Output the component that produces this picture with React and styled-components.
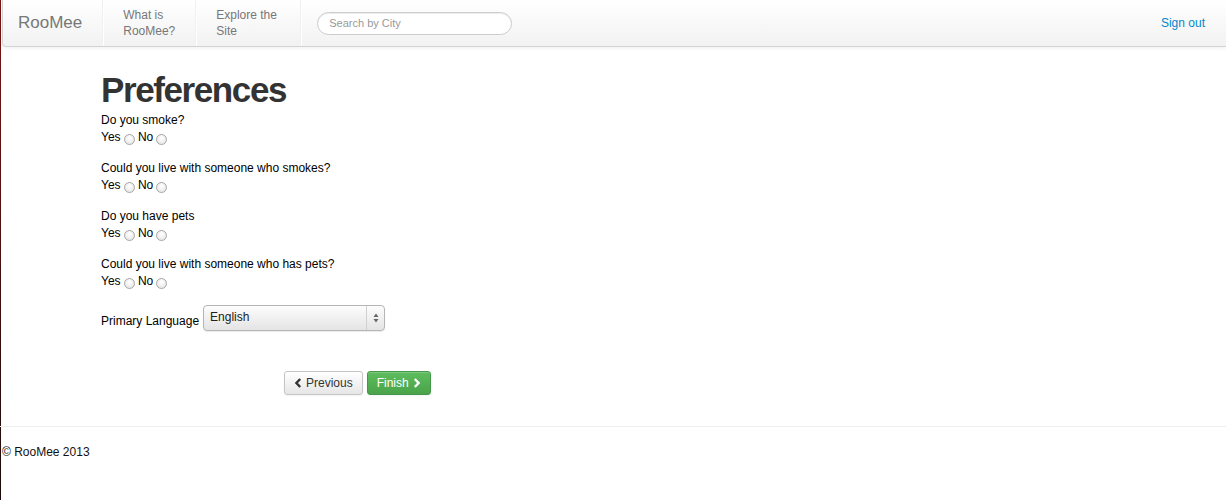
import styled, { createGlobalStyle } from 'styled-components';

const GlobalStyle = createGlobalStyle`
  html, body {
    margin: 0;
    padding: 0;
    background: #fff;
  }
  body {
    font-family: "Liberation Sans", Arial, sans-serif;
    font-size: 12px;
    color: #000;
    /* thin dark edge down the left side of the window */
    background: linear-gradient(#7a1515, #1a0a0a) left top / 1px 100% no-repeat, #fff;
    min-height: 500px;
  }
`;

// navbar
const NavBar = styled.div`
  margin-left: 2px;
  height: 46px;
  display: flex;
  align-items: center;
  background: linear-gradient(#ffffff, #f2f2f2);
  border: 1px solid #d4d4d4;
  border-top: none;
  border-right: none;
  border-bottom-left-radius: 4px;
  box-shadow: 0 1px 4px rgba(0, 0, 0, 0.065);
`;

const Brand = styled.a`
  font-size: 17px;
  color: #777;
  padding: 0 20px 0 15px;
  text-decoration: none;
`;

const Divider = styled.div`
  width: 0;
  height: 46px;
  border-left: 1px solid #f0f0f0;
  border-right: 1px solid #fff;
`;

const NavLink = styled.a`
  display: block;
  width: ${(p) => p.$w}px;
  padding: 0 20px 0 19px;
  color: #777;
  font-size: 12px;
  line-height: 16px;
  text-decoration: none;
`;

const Search = styled.input`
  margin-left: 15px;
  width: 195px;
  height: 23px;
  box-sizing: border-box;
  border: 1px solid #ccc;
  border-radius: 12px;
  padding: 0 11px;
  font-family: "Liberation Sans", Arial, sans-serif;
  font-size: 11px;
  box-shadow: inset 0 1px 1px rgba(0, 0, 0, 0.075);
  &::placeholder {
    color: #999;
  }
`;

const SignOut = styled.a`
  margin-left: auto;
  margin-right: 21px;
  color: #0088cc;
  font-size: 12px;
  text-decoration: none;
`;

// form area
const Main = styled.div`
  padding: 23px 101px 0;
`;

const Title = styled.h1`
  margin: 0 0 2px;
  font-size: 35px;
  line-height: 40px;
  letter-spacing: -1.4px;
  font-weight: bold;
  color: #333;
`;

const Question = styled.div`
  margin-bottom: 14px;
  line-height: 17px;
`;

const Radio = styled.input.attrs({ type: 'radio' })`
  appearance: none;
  width: 11px;
  height: 11px;
  margin: 0 0 0 3px;
  vertical-align: -4px;
  border: 1px solid #a5a5a5;
  border-radius: 50%;
  background: radial-gradient(circle at 50% 35%, #fff, #e2e2e2);
  box-sizing: border-box;
`;

const LangRow = styled.div`
  display: flex;
  align-items: flex-end;
  margin-top: 15px;
  line-height: 17px;
`;

const LangLabel = styled.label`
  padding-bottom: 1px;
`;

const SelectBox = styled.div`
  display: flex;
  margin-left: 4px;
  width: 182px;
  height: 26px;
  box-sizing: border-box;
  border: 1px solid #b5b5b5;
  border-radius: 4px;
  background: linear-gradient(#fdfdfd, #e4e4e4);
  box-shadow: 0 1px 1px rgba(0, 0, 0, 0.08);
`;

const SelectText = styled.span`
  flex: 1;
  padding: 3px 0 0 6px;
  font-size: 12px;
  color: #222;
`;

const SelectArrows = styled.span`
  width: 17px;
  border-left: 1px solid #d0d0d0;
  display: flex;
  align-items: center;
  justify-content: center;
`;

const Buttons = styled.div`
  display: flex;
  gap: 4px;
  margin: 40px 0 0 183px;
`;

const Button = styled.button`
  height: 24px;
  box-sizing: border-box;
  padding: 0 9px;
  display: flex;
  align-items: center;
  gap: 4px;
  font-family: "Liberation Sans", Arial, sans-serif;
  font-size: 12px;
  border-radius: 3px;
  border: 1px solid ${(p) => (p.$success ? '#44974a' : '#c5c5c5')};
  color: ${(p) => (p.$success ? '#fff' : '#333')};
  background: ${(p) =>
    p.$success
      ? 'linear-gradient(#5ebd5e, #4aa34a)'
      : 'linear-gradient(#ffffff, #e6e6e6)'};
  box-shadow: inset 0 1px 0 rgba(255, 255, 255, 0.2), 0 1px 2px rgba(0, 0, 0, 0.05);
`;

const Footer = styled.div`
  margin-top: 31px;
  border-top: 1px solid #eee;
  padding: 18px 0 0 2px;
  font-size: 12px;
  color: #111;
`;

const Chevron = ({ dir }) => (
  <svg width="8" height="10" viewBox="0 0 8 10">
    <path
      d={dir === 'left' ? 'M6.2 1 L2.4 5 L6.2 9' : 'M1.8 1 L5.6 5 L1.8 9'}
      fill="none"
      stroke="currentColor"
      strokeWidth="2.4"
    />
  </svg>
);

const questions = [
  'Do you smoke?',
  'Could you live with someone who smokes?',
  'Do you have pets',
  'Could you live with someone who has pets?',
];

const App = () => {
  return (
    <>
      <GlobalStyle />
      <NavBar>
        <Brand>RooMee</Brand>
        <Divider />
        <NavLink $w={52}>What is RooMee?</NavLink>
        <Divider />
        <NavLink $w={64}>Explore the Site</NavLink>
        <Divider />
        <Search placeholder="Search by City" />
        <SignOut>Sign out</SignOut>
      </NavBar>
      <Main>
        <Title>Preferences</Title>
        {questions.map((q, i) => (
          <Question key={q}>
            {q}
            <br />
            Yes<Radio name={'q' + i} /> No<Radio name={'q' + i} />
          </Question>
        ))}
        <LangRow>
          <LangLabel>Primary Language</LangLabel>
          <SelectBox>
            <SelectText>English</SelectText>
            <SelectArrows>
              <svg width="6" height="10" viewBox="0 0 6 10">
                <path d="M3 0.5 L5.5 4 L0.5 4 Z M3 9.5 L5.5 6 L0.5 6 Z" fill="#666" />
              </svg>
            </SelectArrows>
          </SelectBox>
        </LangRow>
        <Buttons>
          <Button>
            <Chevron dir="left" /> Previous
          </Button>
          <Button $success>
            Finish <Chevron dir="right" />
          </Button>
        </Buttons>
      </Main>
      <Footer>© RooMee 2013</Footer>
    </>
  );
};

export default App;
